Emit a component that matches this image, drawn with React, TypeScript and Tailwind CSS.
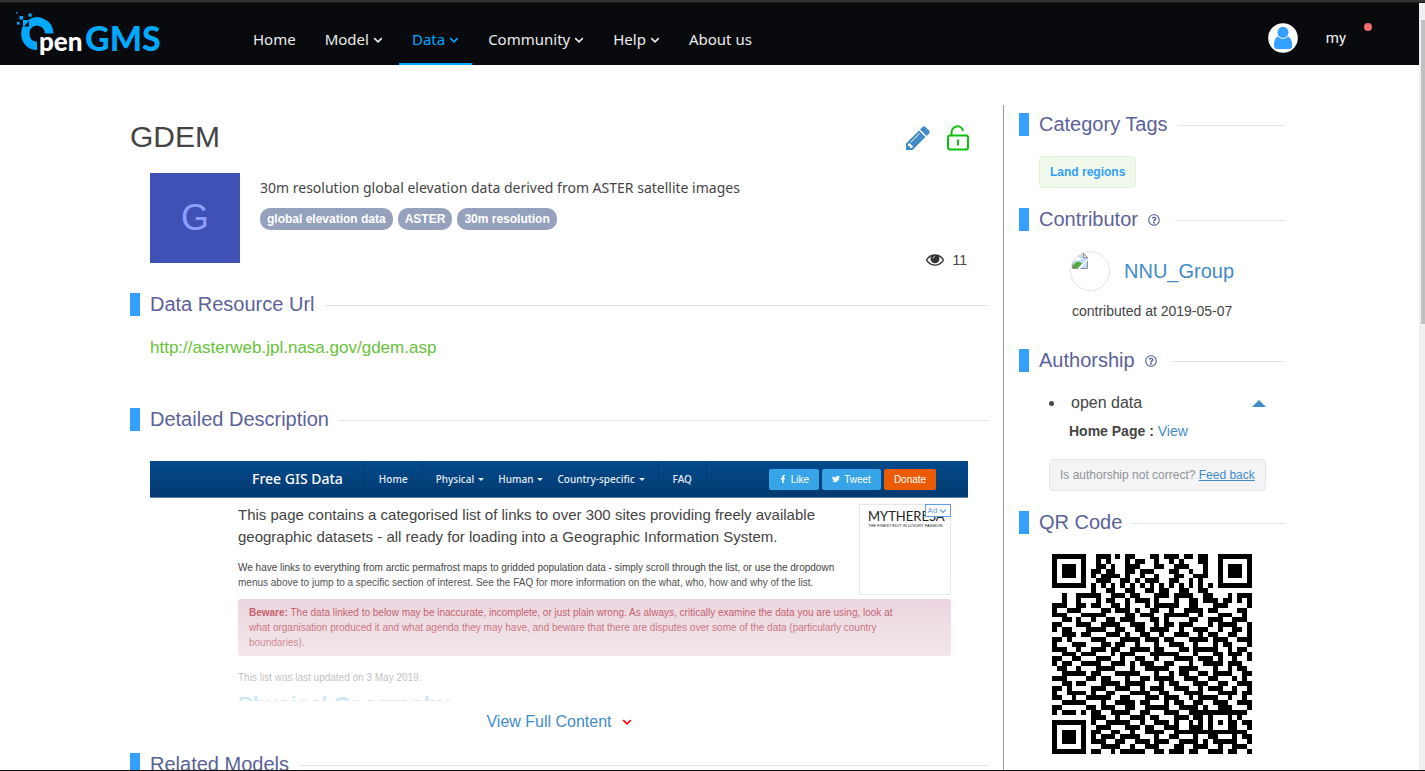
import type { ReactNode } from "react";
import { FaRegQuestionCircle, FaFacebookF, FaTwitter } from "react-icons/fa";

const QR_ROWS = [
  "00000000011101011000110111011011000000000",
  "00000000010100010110010010100011000000000",
  "00000000011010011100011001110001000000000",
  "00000000110110011011100011001001000000000",
  "00000000101111010010010001100111000000000",
  "00000000011100110101110011001010000000000",
  "00000000000000000000000000000000000000000",
  "00000000100110011001101100110011000000000",
  "00100111110011101100011101111001100010111",
  "00100110010110010111010001001101110110101",
  "11100110110011010001011111001100011100001",
  "10011100001101110100110010011110110000110",
  "11100001111000011011100111110010001110010",
  "00110100100110111000110100001100111001110",
  "11000111001111001110010110111000101111001",
  "10110001111001100110111100100111001001101",
  "00111011000111010011001001110010110011001",
  "11010010111000111101110110001111011100111",
  "10001110001101100100010011100100010110001",
  "11100100111011001111011000110111110010110",
  "00111001100010111000111111000100011011101",
  "11001110011100100110010001111011101001001",
  "10110011110011101011100110001001111011100",
  "01100100011110001001111100111100010010110",
  "00111110110001111100010010110011011110011",
  "11100011101100010011011110011100110001010",
  "00110110001111011110001011000111001100111",
  "11010010111001110010111001110010111001001",
  "10011100100110001111001100011110001111011",
  "11001011111100110001110111001011110010010",
  "00111110001001111011000101100110011100111",
  "11000011101110011001111100111101001110001",
  "10111000110011110011000111001111111001110",
  "00000000111001001110110001110110001100100",
  "00000000100111110010011101001010101111011",
  "00000000011100011101100111001110001001001",
  "00000000110011001001111001111111111101110",
  "00000000101110111100010011000100110001011",
  "00000000111001100111011100111101011111001",
  "00000000001111001001110001100111001001110",
  "00000000110010111110011011101100111011001",
];

const QR_SIZE = QR_ROWS.length;

const FINDERS = [
  [0, 0],
  [QR_SIZE - 7, 0],
  [0, QR_SIZE - 7],
];

function isDark(x: number, y: number): boolean {
  for (const [fx, fy] of FINDERS) {
    const d = Math.max(Math.abs(x - fx - 3), Math.abs(y - fy - 3));
    if (d <= 4) return d === 3 || d <= 1;
  }
  const a = Math.max(Math.abs(x - 34), Math.abs(y - 34));
  if (a <= 2) return a !== 1;
  if (x === 6 || y === 6) return (x + y) % 2 === 0;
  return QR_ROWS[y][x] === "1";
}

function QrCode() {
  let d = "";
  for (let y = 0; y < QR_SIZE; y++) {
    for (let x = 0; x < QR_SIZE; x++) {
      if (isDark(x, y)) d += `M${x} ${y}h1v1h-1z`;
    }
  }
  return (
    <svg
      role="img"
      aria-label="QR code"
      viewBox={`0 0 ${QR_SIZE} ${QR_SIZE}`}
      className="size-[200px]"
      shapeRendering="crispEdges"
    >
      <path d={d} fill="#000" />
    </svg>
  );
}

function Chevron({ className = "" }: { className?: string }) {
  return (
    <svg viewBox="0 0 10 8" className={`h-2 w-[10px] ${className}`} fill="none" stroke="currentColor" strokeWidth="1.6">
      <path d="M1.200 2.200l3.800 3.600 3.800-3.600" />
    </svg>
  );
}

function Logo() {
  return (
    <a href="#" aria-label="OpenGMS" className="block">
      <svg viewBox="0 0 148 50" className="mt-1 h-[50px] w-[148px]">
        <g fill="#00a8ff">
          <rect x="0" y="1" width="1.5" height="1.5" />
          <rect x="3.5" y="5" width="3.6" height="3.6" />
          <rect x="12.5" y="2.500" width="3.2" height="3.2" />
          <rect x="1" y="11" width="2.6" height="2.6" />
          <path d="M7 9h7v6H7z" />
        </g>
        <path
          d="M33.200 22.500A12.200 12.200 0 0 0 13.600 13C6 19 8.500 35 21 34.800"
          fill="none"
          stroke="#00a8ff"
          strokeWidth="8.4"
        />
        <path d="M8 15.500l5-5.500v5.500z" fill="#090a0e" />
        <text x="23" y="39.500" fontSize="26" fontWeight="900" fill="#fff" fontFamily="Lato, sans-serif">
          pen
        </text>
        <text x="69" y="39.500" fontSize="34" fontWeight="900" fill="#00a8ff" fontFamily="Lato, sans-serif">
          GMS
        </text>
      </svg>
    </a>
  );
}

function NavItem({ label, menu, active }: { label: string; menu?: boolean; active?: boolean }) {
  return (
    <a
      href="#"
      className={`flex h-full items-center gap-1 border-b-2 px-[13px] pt-3 ${
        active ? "border-[#00a8ff] text-[#00a8ff]" : "border-transparent text-[#ececec]"
      }`}
    >
      {label}
      {menu && <Chevron className="mt-[2px]" />}
    </a>
  );
}

function Header() {
  return (
    <header className="flex h-[62px] shrink-0 items-center bg-[#090a0e] pr-[47px] pl-4">
      <Logo />
      <nav className="ml-[76px] flex h-full items-center gap-[3px] font-['Noto_Sans',sans-serif] text-[15px]">
        <NavItem label="Home" />
        <NavItem label="Model" menu />
        <NavItem label="Data" menu active />
        <NavItem label="Community" menu />
        <NavItem label="Help" menu />
        <NavItem label="About us" />
      </nav>
      <div className="ml-auto flex items-center pt-2">
        <svg viewBox="0 0 30 30" className="size-[30px]">
          <circle cx="15" cy="15" r="14.8" fill="#fff" />
          <path d="M6 22c0-5 2-8 5-9 2 2.500 6 2.500 8 0 3 1 5.200 4 5.200 9 0 3-1 4-3 4h-12c-2 0-3.200-1-3.200-4z" fill="#339fff" />
          <circle cx="15" cy="9.400" r="6" fill="#339fff" stroke="#fff" strokeWidth="1" />
        </svg>
        <a href="#" className="ml-7 font-[Roboto,sans-serif] text-[15px] text-[#f2f2f2]">
          my
        </a>
        <span className="mb-[22px] ml-[18px] size-2 rounded-full bg-[#f56c6c]" />
      </div>
    </header>
  );
}

function SectionTitle({ children, help }: { children: string; help?: boolean }) {
  return (
    <div className="flex h-[23px] items-center">
      <span className="h-full w-[10px] bg-[#339fff]" />
      <h2 className="ml-[10px] text-xl leading-[23px] text-[#5b6299]">{children}</h2>
      {help && (
        <button type="button" aria-label={`About ${children}`} className="ml-[10px] text-[#5b6299]">
          <FaRegQuestionCircle className="size-3" />
        </button>
      )}
      <span className={`mt-px h-px flex-1 bg-[#e4e4e4] ${help ? "ml-[15px]" : "ml-[10px]"}`} />
    </div>
  );
}

function Badge({ children }: { children: string }) {
  return (
    <a href="#" className="rounded-[10px] bg-[#95a1bd] px-[7px] text-xs leading-[22px] font-bold text-white">
      {children}
    </a>
  );
}

function SiteLink({ children, menu }: { children: string; menu?: boolean }) {
  return (
    <span className="flex items-center gap-1 px-[7px]">
      {children}
      {menu && (
        <svg viewBox="0 0 6 3" className="h-[3px] w-[6px]" fill="currentColor">
          <path d="M0 0h6l-3 3z" />
        </svg>
      )}
    </span>
  );
}

function SiteButton({ children, className }: { children: ReactNode; className: string }) {
  return (
    <span className={`flex h-[21px] items-center justify-center gap-1 rounded-[2px] text-[10px] text-white ${className}`}>
      {children}
    </span>
  );
}

function SitePreview() {
  return (
    <div className="relative h-60 overflow-hidden text-[#444]">
      <div className="flex h-[37px] items-center border-b border-[#5d83ab] bg-linear-to-b from-[#034a8b] to-[#033a70] pr-8 pl-[102px] font-['Noto_Sans',sans-serif] text-[10px] font-medium text-[#e4ecf4]">
        <span className="pb-[2px] text-[14px] text-white">Free GIS Data</span>
        <span className="ml-[21px] flex h-full items-center border-x border-[#023a70] px-[7px]">
          <SiteLink>Home</SiteLink>
        </span>
        <span className="flex h-full items-center px-[6px]">
          <SiteLink menu>Physical</SiteLink>
          <SiteLink menu>Human</SiteLink>
          <SiteLink menu>Country-specific</SiteLink>
        </span>
        <span className="flex h-full items-center border-x border-[#023a70] px-[7px]">
          <SiteLink>FAQ</SiteLink>
        </span>
        <span className="ml-auto flex gap-[3px] font-['Liberation_Sans',sans-serif]">
          <SiteButton className="w-[50px] bg-[#37a4e8]">
            <FaFacebookF className="size-2" />
            Like
          </SiteButton>
          <SiteButton className="w-[59px] bg-[#37a4e8]">
            <FaTwitter className="size-2" />
            Tweet
          </SiteButton>
          <SiteButton className="w-[52px] bg-[#ea5b03]">Donate</SiteButton>
        </span>
      </div>
      <div className="pr-[17px] pl-[88px]">
        <div className="flex justify-between pt-[6px]">
          <div className="whitespace-nowrap">
            <p className="text-[15px] leading-[22px]">
              This page contains a categorised list of links to over 300 sites providing freely available
              <br />
              geographic datasets - all ready for loading into a Geographic Information System.
            </p>
            <p className="mt-3 text-[10px] leading-[15px]">
              We have links to everything from arctic permafrost maps to gridded population data - simply scroll through the list, or use the dropdown
              <br />
              menus above to jump to a specific section of interest. See the FAQ for more information on the what, who, how and why of the list.
            </p>
          </div>
          <div className="relative h-[91px] w-[92px] shrink-0 border border-[#e6e6e6] bg-white pt-1 pl-2 text-[#222]">
            <p className="font-[Lato,sans-serif] text-[13px] leading-[14px]">MYTHERESA</p>
            <p className="text-[4px] leading-[5px] whitespace-nowrap">THE FINEST EDIT IN LUXURY FASHION</p>
            <span className="absolute -top-px -right-px flex h-[13px] w-[26px] items-center justify-center gap-px border border-[#5f9de8] bg-white text-[8px] text-[#5f9de8]">
              Ad
              <Chevron className="scale-75" />
            </span>
          </div>
        </div>
        <p className="mt-1 h-[57px] rounded-[3px] bg-[#e6cdd9] px-[11px] pt-[6px] text-[10px] leading-[15px] whitespace-nowrap text-[#b02a36]">
          <b>Beware:</b> The data linked to below may be inaccurate, incomplete, or just plain wrong. As always, critically examine the data you are using, look at
          <br />
          what organisation produced it and what agenda they may have, and beware that there are disputes over some of the data (particularly country
          <br />
          boundaries).
        </p>
        <p className="mt-[14px] text-[10px] leading-[15px]">This list was last updated on 3 May 2019.</p>
        <p className="mt-2 text-[22px] leading-6 font-bold text-[#1e8fc4]">Physical Geography</p>
      </div>
      <div className="absolute inset-x-0 bottom-0 h-[130px] bg-linear-to-b from-white/0 to-white/80" />
    </div>
  );
}

function BrokenImage() {
  return (
    <svg viewBox="0 0 16 16" className="size-4">
      <path d="M.5.5h11l4 4v11H.5z" fill="#c3d9f5" stroke="#8e8e8e" />
      <path d="M3 6.500c.5-3 4-3 5-1.200 2 0 2 2 1 2H3z" fill="#fff" />
      <path d="M1 15v-2c3-5 6-5 9-2.500L6 15z" fill="#54a836" />
      <path d="M11.500.5v4h4z" fill="#fff" stroke="#8e8e8e" />
      <path d="M16 7.500L8 16H5.500L16 5.500z" fill="#fff" />
    </svg>
  );
}

function MainColumn() {
  return (
    <main className="min-w-0 flex-1">
      <div className="flex items-center justify-between pt-[14px]">
        <h1 className="text-[30px] leading-9 text-[#444]">GDEM</h1>
        <div className="mr-[18px] flex items-center gap-4">
          <button type="button" aria-label="Edit">
            <svg viewBox="128 128 1536 1536" className="mt-[2px] size-6" fill="#428bca">
              <path d="M491 1536l91-91-235-235-91 91v107h128v128h107zm523-928q0-22-22-22-10 0-17 7l-542 542q-7 7-7 17 0 22 22 22 10 0 17-7l542-542q7-7 7-17zm-54-192l416 416-832 832h-416v-416zm683 96q0 53-37 90l-166 166-416-416 166-165q36-38 90-38 53 0 91 38l235 234q37 39 37 91z" />
            </svg>
          </button>
          <button type="button" aria-label="Public access">
            <svg viewBox="0 0 24 26" className="mt-[2px] h-[26px] w-6" fill="none" stroke="#0fc10f" strokeWidth="2">
              <rect x="2" y="10.500" width="20" height="14" rx="2" />
              <path d="M5.500 10.500V8a6 6.500 0 0 1 11.700-2.200M12 14.500v6" />
            </svg>
          </button>
        </div>
      </div>

      <div className="mt-[18px] flex pr-[21px] pl-5">
        <div className="flex size-[90px] shrink-0 items-center justify-center bg-[#3f51b5] text-[36px] text-[#8c9eff]">G</div>
        <div className="ml-5 flex flex-1 flex-col">
          <p className="mt-1 font-['Noto_Sans',sans-serif] text-sm leading-[22px] text-[#444]">
            30m resolution global elevation data derived from ASTER satellite images
          </p>
          <div className="mt-[9px] flex gap-[5px]">
            <Badge>global elevation data</Badge>
            <Badge>ASTER</Badge>
            <Badge>30m resolution</Badge>
          </div>
          <div className="mt-5 flex items-center justify-end gap-2 text-sm leading-5 text-[#444]">
            <svg viewBox="0 384 1792 1152" className="h-3 w-[18px]" fill="#333" role="img" aria-label="Views">
              <path d="M1664 960q-152-236-381-353 61 104 61 225 0 185-131.500 316.500t-316.500 131.500-316.500-131.500-131.500-316.500q0-121 61-225-229 117-381 353 133 205 333.500 326.500t434.500 121.500 434.500-121.500 333.500-326.500zm-720-384q0-20-14-34t-34-14q-125 0-214.500 89.500t-89.500 214.500q0 20 14 34t34 14 34-14 14-34q0-86 61-147t147-61q20 0 34-14t14-34zm848 384q0 34-20 69-140 230-376.500 368.500t-499.500 138.500-499.500-139-376.500-368q-20-35-20-69t20-69q140-229 376.500-368t499.500-139 499.500 139 376.500 368q20 35 20 69z" />
              <circle cx="896" cy="832" r="330" />
              <path d="M690 820q10-180 200-210" fill="none" stroke="#fff" strokeWidth="70" />
            </svg>
            11
          </div>
        </div>
      </div>

      <section className="mt-[23px]">
        <SectionTitle>Data Resource Url</SectionTitle>
        <a href="http://asterweb.jpl.nasa.gov/gdem.asp" className="mt-5 ml-5 block text-[17px] leading-6 text-[#67c23a]">
          http://asterweb.jpl.nasa.gov/gdem.asp
        </a>
      </section>

      <section className="mt-12">
        <SectionTitle>Detailed Description</SectionTitle>
        <div className="mt-[30px] mr-5 ml-5">
          <SitePreview />
          <div className="mt-[9px] flex justify-center">
            <button type="button" className="flex items-center gap-[10px] text-base leading-6 text-[#428bca]">
              View Full Content
              <Chevron className="text-[#f00]" />
            </button>
          </div>
        </div>
      </section>

      <section className="mt-[19px]">
        <SectionTitle>Related Models</SectionTitle>
      </section>
    </main>
  );
}

function Sidebar() {
  return (
    <aside className="ml-[15px] w-[282px] shrink-0 border-l border-[#999] pt-2 pl-[15px] text-[#444]">
      <SectionTitle>Category Tags</SectionTitle>
      <a
        href="#"
        className="mt-5 ml-5 inline-block rounded border border-[#e1f3d8] bg-[#f0f9eb] px-[10px] text-xs leading-[30px] font-bold text-[#339fff]"
      >
        Land regions
      </a>

      <section className="mt-[20px]">
        <SectionTitle help>Contributor</SectionTitle>
        <div className="mt-5 ml-[51px] flex items-center gap-[14px]">
          <span className="size-10 overflow-hidden rounded-full border border-[#e4e4e4] pt-px pl-px">
            <BrokenImage />
          </span>
          <a href="#" className="text-xl text-[#428bca]">
            NNU_Group
          </a>
        </div>
        <p className="mt-[10px] ml-[53px] text-sm leading-5">contributed at 2019-05-07</p>
      </section>

      <section className="mt-7">
        <SectionTitle help>Authorship</SectionTitle>
        <ul className="mt-[19px] mr-[19px] ml-[30px]">
          <li className="flex items-center text-base leading-6">
            <span className="size-[5px] rounded-full bg-[#444]" />
            <span className="ml-[17px]">open data</span>
            <button type="button" aria-label="Collapse open data" className="ml-auto">
              <svg viewBox="0 0 14 7" className="h-[7px] w-[14px]" fill="#428bca">
                <path d="M7 0l7 7H0z" />
              </svg>
            </button>
          </li>
        </ul>
        <p className="mt-[6px] ml-[50px] text-sm leading-5">
          <b>Home Page :</b>{" "}
          <a href="#" className="text-[#428bca]">
            View
          </a>
        </p>
        <p className="mt-[18px] mr-[19px] ml-[30px] rounded border border-[#e6e6e8] bg-[#f4f4f5] px-[10px] text-xs leading-[30px] whitespace-nowrap text-[#909399]">
          Is authorship not correct?{" "}
          <a href="#" className="text-[#428bca] underline">
            Feed back
          </a>
        </p>
      </section>

      <section className="mt-5">
        <SectionTitle>QR Code</SectionTitle>
        <div className="mt-5 ml-[33px]">
          <QrCode />
        </div>
      </section>
    </aside>
  );
}

export default function App() {
  return (
    <div className="flex h-screen flex-col overflow-hidden bg-white font-['Liberation_Sans',Arial,sans-serif]">
      <div className="h-[3px] shrink-0 border-b border-[#1c1c1c] bg-[#333]" />
      <div className="flex min-h-0 flex-1">
        <div className="flex min-w-0 flex-1 flex-col overflow-hidden">
          <Header />
          <div className="mx-auto flex w-full max-w-[1159px] pt-10 pr-1">
            <MainColumn />
            <Sidebar />
          </div>
        </div>
        <div className="w-[6px] shrink-0 bg-[#f0f0f0] pt-[17px] pl-[2px]">
          <div className="h-[304px] bg-[#c0c0c0]" />
        </div>
      </div>
      <div className="h-px shrink-0 bg-[#111]" />
    </div>
  );
}
